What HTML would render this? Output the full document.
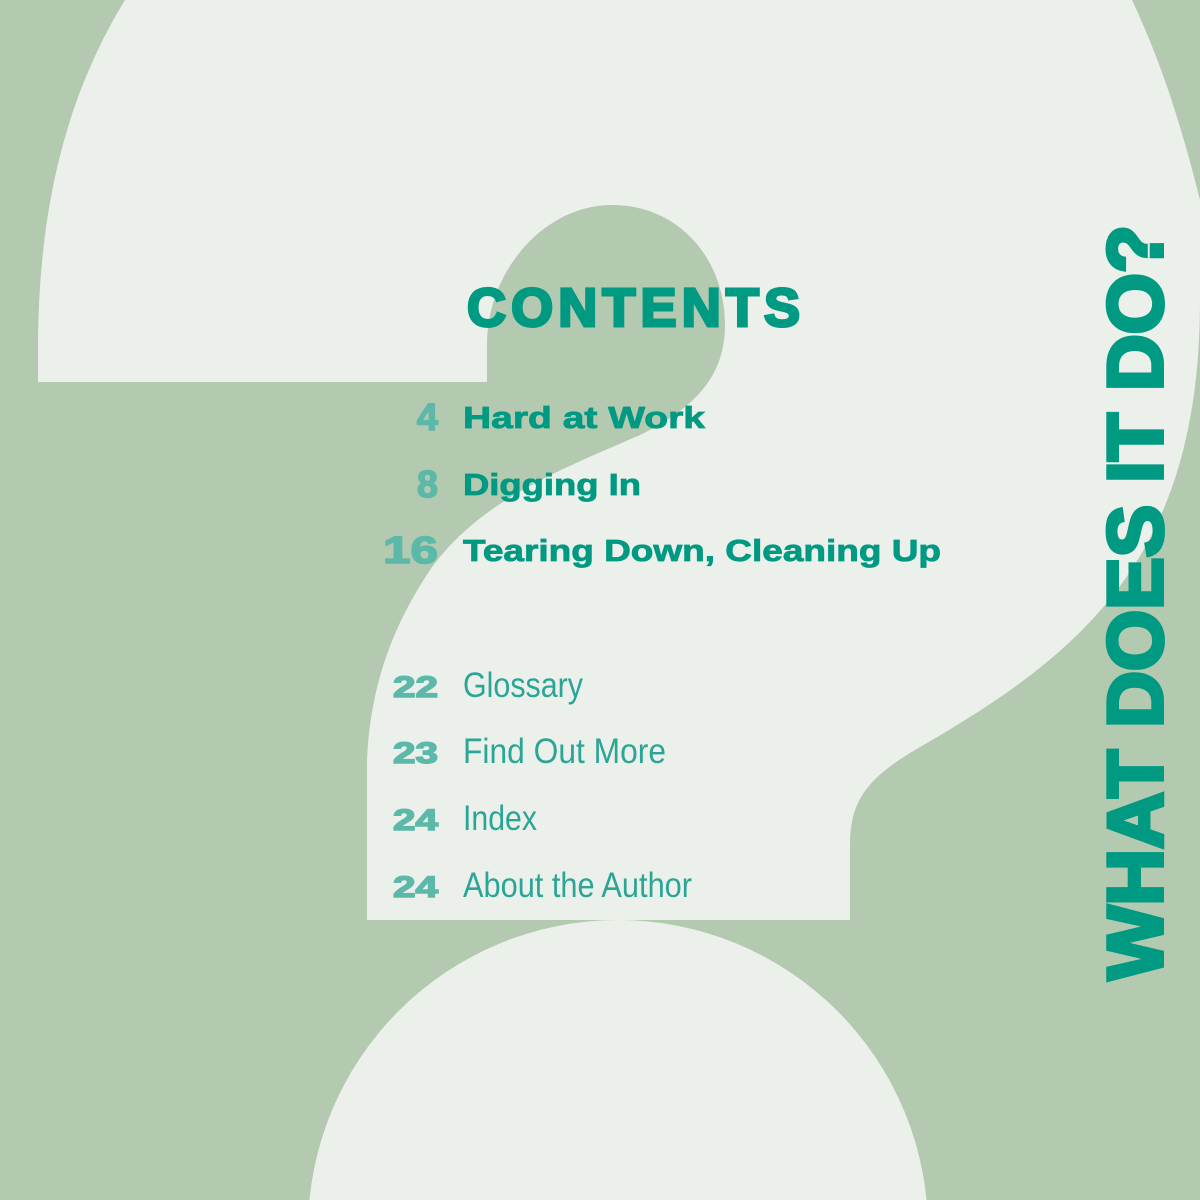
<!DOCTYPE html>
<html><head><meta charset="utf-8"><style>
html,body{margin:0;padding:0;overflow:hidden;}
body{width:1200px;height:1200px;overflow:hidden;background:#b3cab0;position:relative;}
svg{display:block;position:absolute;left:0;top:0}
</style></head><body>
<svg width="1200" height="1200" viewBox="0 0 1200 1200" xmlns="http://www.w3.org/2000/svg">
<rect width="1200" height="1200" fill="#b3cab0"/>
<path fill="#ecf0eb" d="M38,382 L487,382 L487,345 C487,270 545,205 612,205 C680,205 725,260 725,325 C725,380 690,410 640,435 C560,470 480,500 430,570 C390,630 370,690 367,760 L367,920 L850,920 L850,845 C850,800 868,778 915,750 C1080,655 1200,560 1200,300 L1200,200 C1180,120 1160,60 1132,0 L125,0 C70,90 38,200 38,350 Z"/>
<circle cx="618" cy="1230" r="310" fill="#ecf0eb"/>
<g font-family="'Liberation Sans',sans-serif" font-weight="bold" fill="#009982">
<text x="467" y="326" font-size="54" textLength="333" lengthAdjust="spacing" stroke="#009982" stroke-width="3">CONTENTS</text>
<g font-size="31" stroke="#009982" stroke-width="0.8">
<text x="463" y="428" textLength="242" lengthAdjust="spacingAndGlyphs">Hard at Work</text>
<text x="463" y="495" textLength="178" lengthAdjust="spacingAndGlyphs">Digging In</text>
<text x="463" y="561" textLength="478" lengthAdjust="spacingAndGlyphs">Tearing Down, Cleaning Up</text>
</g>
<g font-size="38" fill="#5cb8a8" stroke="#5cb8a8" stroke-width="1.5" text-anchor="end">
<text x="438" y="430">4</text>
<text x="438" y="497">8</text>
<text x="438" y="563" textLength="55" lengthAdjust="spacingAndGlyphs">16</text>
<text x="438" y="697" font-size="30" textLength="45" lengthAdjust="spacingAndGlyphs">22</text>
<text x="438" y="763" font-size="30" textLength="45" lengthAdjust="spacingAndGlyphs">23</text>
<text x="438" y="830" font-size="30" textLength="45" lengthAdjust="spacingAndGlyphs">24</text>
<text x="438" y="897" font-size="30" textLength="45" lengthAdjust="spacingAndGlyphs">24</text>
</g>
<g font-size="35" font-weight="normal" fill="#2aa596">
<text x="463" y="697" textLength="120" lengthAdjust="spacingAndGlyphs">Glossary</text>
<text x="463" y="763" textLength="203" lengthAdjust="spacingAndGlyphs">Find Out More</text>
<text x="463" y="830" textLength="74" lengthAdjust="spacingAndGlyphs">Index</text>
<text x="463" y="897" textLength="229" lengthAdjust="spacingAndGlyphs">About the Author</text>
</g>
<text transform="translate(1162,980) rotate(-90)" x="0" y="0" font-size="78" textLength="755" lengthAdjust="spacingAndGlyphs" stroke="#009982" stroke-width="4">WHAT DOES IT DO?</text>
</g>
</svg>
</body></html>
